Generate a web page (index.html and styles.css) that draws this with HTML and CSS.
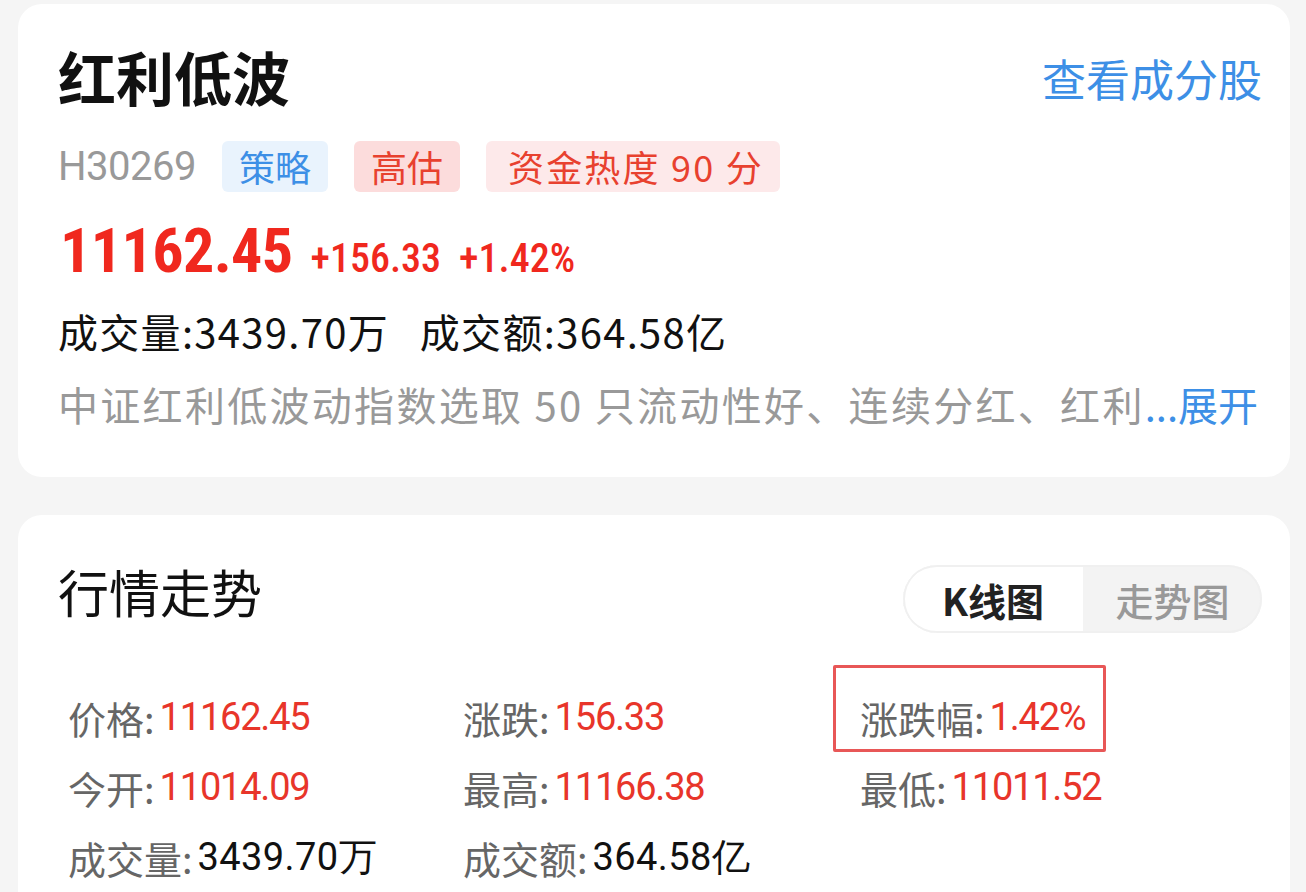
FILE: index.html
```html
<!DOCTYPE html>
<html lang="zh">
<head>
<meta charset="utf-8">
<title>红利低波</title>
<link rel="stylesheet" href="styles.css">
</head>
<body>
<div class="page">
  <section class="card info">
    <div class="head">
      <h1 class="title">红利低波</h1>
      <a class="link">查看成分股</a>
    </div>
    <div class="tags">
      <span class="code">H30269</span>
      <span class="tag blue">策略</span>
      <span class="tag pink">高估</span>
      <span class="tag light">资金热度 90 分</span>
    </div>
    <div class="price">
      <span class="big">11162.45</span>
      <span class="chg">+156.33</span>
      <span class="chg">+1.42%</span>
    </div>
    <div class="vol">成交量:3439.70万&nbsp;&nbsp;&nbsp;成交额:364.58亿</div>
    <div class="desc">中证红利低波动指数选取 50 只流动性好、连续分红、红利<span class="more">...展开</span></div>
  </section>
  <section class="card market">
    <div class="mhead">
      <h2 class="mtitle">行情走势</h2>
      <div class="toggle">
        <span class="seg on">K线图</span>
        <span class="seg off">走势图</span>
      </div>
    </div>
    <div class="stats">
      <div class="cell"><span class="lb">价格:</span><span class="up">11162.45</span></div>
      <div class="cell"><span class="lb">涨跌:</span><span class="up">156.33</span></div>
      <div class="cell mark"><span class="lb">涨跌幅:</span><span class="up">1.42%</span></div>
      <div class="cell"><span class="lb">今开:</span><span class="up">11014.09</span></div>
      <div class="cell"><span class="lb">最高:</span><span class="up">11166.38</span></div>
      <div class="cell"><span class="lb">最低:</span><span class="up">11011.52</span></div>
      <div class="cell"><span class="lb">成交量:</span><span class="nv">3439.70万</span></div>
      <div class="cell"><span class="lb">成交额:</span><span class="nv">364.58亿</span></div>
    </div>
  </section>
</div>
</body>
</html>
```

FILE: styles.css
```css
* { box-sizing: border-box; margin: 0; padding: 0; }
html, body { height: 100%; }
body {
  background: #f5f5f5;
  font-family: "Noto Sans CJK SC", "Noto Sans", sans-serif;
  overflow: hidden;
}
.page {
  padding: 4px 16px 0 18px;
}
.card {
  background: #fff;
  border-radius: 24px;
}
.info {
  height: 473px;
  padding: 32px 28px 0 40px;
}
.head {
  display: flex;
  justify-content: space-between;
  align-items: center;
  height: 80px;
}
.title {
  font-size: 58px;
  font-weight: 700;
  color: #111;
  line-height: 80px;
}
.link {
  font-size: 44px;
  color: #3d8fe6;
  line-height: 80px;
  margin-top: 4px;
}
.tags {
  display: flex;
  align-items: center;
  margin-top: 25px;
  height: 51px;
}
.code {
  font-family: "Roboto", "Liberation Sans", sans-serif;
  font-size: 40px;
  color: #999;
  margin-right: 26px;
  letter-spacing: -0.5px;
}
.tag {
  height: 51px;
  line-height: 51px;
  font-size: 36px;
  padding: 0 17px;
  border-radius: 6px;
  margin-right: 26px;
}
.tag.blue { background: #e9f3fd; color: #3d8fe6; }
.tag.pink { background: #fcdcdc; color: #e8412f; }
.tag.light {
  background: #fde9ea;
  color: #e8412f;
  padding: 0 16px 0 22px;
  letter-spacing: 2.2px;
}
.price {
  display: flex;
  align-items: baseline;
  margin-top: 22px;
  color: #f0281e;
  font-family: "Roboto", "Liberation Sans", sans-serif;
}
.big {
  font-size: 62px;
  font-weight: 700;
  font-stretch: 87.5%;
  letter-spacing: -0.6px;
  margin-left: 2px;
  margin-right: 18px;
}
.chg {
  font-size: 40px;
  font-weight: 500;
  font-stretch: 87.5%;
  letter-spacing: 0;
  margin-right: 18px;
}
.vol {
  margin-top: 16px;
  font-size: 40px;
  color: #111;
  line-height: 56px;
  letter-spacing: 1.3px;
}
.desc {
  margin-top: 17px;
  font-size: 40px;
  color: #999;
  line-height: 56px;
  letter-spacing: 2.3px;
  white-space: nowrap;
}
.more { color: #3d8fe6; letter-spacing: 0; }

.market {
  margin-top: 38px;
  height: 420px;
  padding: 34px 28px 0 40px;
}
.mhead {
  display: flex;
  justify-content: space-between;
  align-items: center;
}
.mtitle {
  font-size: 51px;
  font-weight: 400;
  color: #111;
  line-height: 68px;
}
.toggle {
  display: flex;
  width: 359px;
  height: 68px;
  border-radius: 34px;
  background: #f3f3f3;
  overflow: hidden;
  margin-top: 16px;
  box-shadow: inset 0 0 0 2px #f0f0f0;
}
.seg {
  flex: 1;
  display: flex;
  align-items: center;
  justify-content: center;
  font-size: 38px;
}
.seg.on {
  flex: 0 0 180px;
  background: #fff;
  color: #222;
  font-weight: 700;
  border-radius: 34px 0 0 34px;
  box-shadow: inset 2px 0 0 #f0f0f0, inset 0 2px 0 #f0f0f0, inset 0 -2px 0 #f0f0f0;
}
.seg.off { color: #999; font-weight: 500; }
.stats {
  display: grid;
  grid-template-columns: 395px 397px 1fr;
  grid-auto-rows: 70px;
  margin-top: 49px;
  padding-left: 10px;
}
.cell {
  display: flex;
  align-items: center;
  font-size: 38px;
  position: relative;
  white-space: nowrap;
}
.lb { color: #666; }
.up, .nv {
  font-family: "Roboto", "Liberation Sans", sans-serif;
  margin-left: 5px;
}
.up { color: #e8352a; letter-spacing: -1.2px; }
.nv { color: #111; letter-spacing: 0.4px; }
.mark::after {
  content: "";
  position: absolute;
  left: -27px;
  top: -17px;
  width: 267px;
  height: 81px;
  border: 3px solid #e85757;
  border-radius: 2px;
}
```
